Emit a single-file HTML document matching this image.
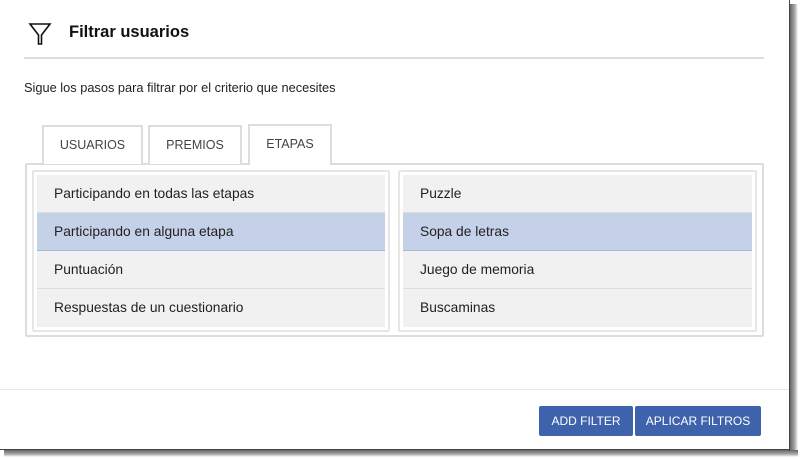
<!DOCTYPE html>
<html><head><meta charset="utf-8"><style>
*{margin:0;padding:0;box-sizing:border-box}
body{width:800px;height:459px;background:#fff;position:relative;overflow:hidden;font-family:"Liberation Sans",sans-serif;color:#222}
.shadowR{position:absolute;left:790px;top:4px;width:8px;height:452px;background:linear-gradient(90deg,#666,#aaa 60%,#fff)}
.shadowB{position:absolute;left:4px;top:450px;width:794px;height:7px;background:linear-gradient(180deg,#666,#aaa 60%,#fff)}
.edge{position:absolute;left:789px;top:0;width:1px;height:451px;background:#444}
.edgeB{position:absolute;left:0;top:449px;width:790px;height:1px;background:#444}
.a{position:absolute}
h1{position:absolute;left:69px;top:23px;font-size:16.5px;font-weight:bold;color:#111}
.hr{position:absolute;left:24px;top:57px;width:740px;height:2px;background:#ddd}
.desc{position:absolute;left:24px;top:80px;font-size:12.8px}
.tab{position:absolute;top:125px;height:39px;border:2px solid #ddd;border-bottom:none;background:#fff;font-size:12.5px;color:#444;text-align:center;line-height:37px}
.panel{position:absolute;left:25px;top:163px;width:739px;height:174px;border:2px solid #ddd;border-radius:2px}
.list{position:absolute;top:170px;height:162px;border:2px solid #e6e6e6;border-radius:2px;background:#fff;padding:3px}
.row{height:38px;background:#f1f1f1;border-bottom:1px solid #ddd;font-size:13.8px;line-height:37px;padding-left:17px;color:#222}
.row.sel{background:#c5d1e8;border-bottom:1px solid #aab8d4}
.row:last-child{border-bottom:none}
.fhr{position:absolute;left:0;top:389px;width:789px;height:1px;background:#e6e6e6}
.btn{position:absolute;top:406px;height:30px;background:#3f62ad;color:#fff;font-size:12px;text-align:center;line-height:30px;border-radius:2px}
</style></head><body>
<div class="shadowR"></div><div class="shadowB"></div><div class="edge"></div><div class="edgeB"></div>
<svg class="a" style="left:28px;top:22px" width="26" height="26" viewBox="0 0 26 26"><path d="M2 2 H22 L13.5 13 V22 H10.5 V13 Z" fill="none" stroke="#111" stroke-width="1.6" stroke-linejoin="miter"/></svg>
<h1>Filtrar usuarios</h1>
<div class="hr"></div>
<div class="desc">Sigue los pasos para filtrar por el criterio que necesites</div>
<div class="panel"></div>
<div class="tab" style="left:42px;width:101px">USUARIOS</div>
<div class="tab" style="left:148px;width:94px">PREMIOS</div>
<div class="tab" style="left:248px;top:124px;width:84px;height:41px">ETAPAS</div>
<div class="list" style="left:32px;width:358px">
<div class="row">Participando en todas las etapas</div>
<div class="row sel">Participando en alguna etapa</div>
<div class="row">Puntuación</div>
<div class="row">Respuestas de un cuestionario</div>
</div>
<div class="list" style="left:398px;width:359px">
<div class="row">Puzzle</div>
<div class="row sel">Sopa de letras</div>
<div class="row">Juego de memoria</div>
<div class="row">Buscaminas</div>
</div>
<div class="fhr"></div>
<div class="btn" style="left:539px;width:94px">ADD FILTER</div>
<div class="btn" style="left:635px;width:126px">APLICAR FILTROS</div>
</body></html>
